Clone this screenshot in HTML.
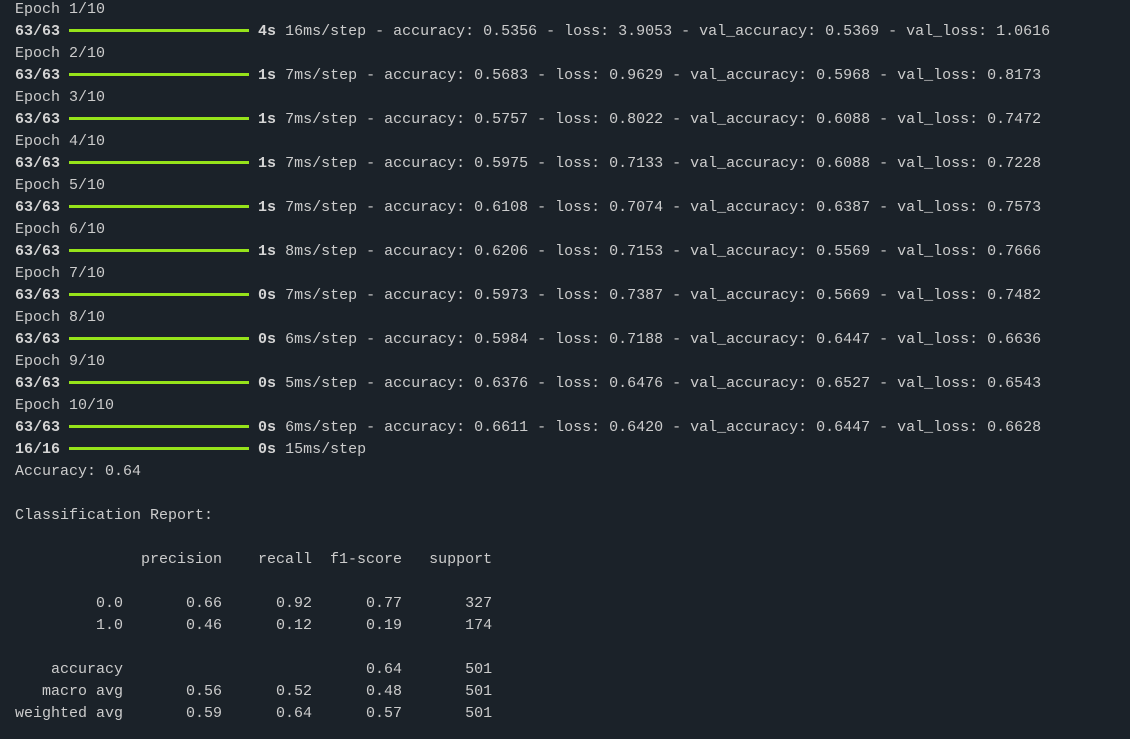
<!DOCTYPE html>
<html><head><meta charset="utf-8"><style>
html,body{margin:0;padding:0;background:#1b2229;width:1130px;height:739px;overflow:hidden}
pre{margin:-1px 0 0 15px;font-family:"Liberation Mono",monospace;font-size:15px;line-height:22px;color:#cccccc;white-space:pre}
b{font-weight:bold;color:#d4d4d4}
.bar{display:inline-block;width:180px;height:3px;background:#96e31a;vertical-align:middle;margin:0 0 2px 0}
</style></head><body><pre>Epoch 1/10
<b>63/63</b> <span class="bar"></span> <b>4s</b> 16ms/step - accuracy: 0.5356 - loss: 3.9053 - val_accuracy: 0.5369 - val_loss: 1.0616
Epoch 2/10
<b>63/63</b> <span class="bar"></span> <b>1s</b> 7ms/step - accuracy: 0.5683 - loss: 0.9629 - val_accuracy: 0.5968 - val_loss: 0.8173
Epoch 3/10
<b>63/63</b> <span class="bar"></span> <b>1s</b> 7ms/step - accuracy: 0.5757 - loss: 0.8022 - val_accuracy: 0.6088 - val_loss: 0.7472
Epoch 4/10
<b>63/63</b> <span class="bar"></span> <b>1s</b> 7ms/step - accuracy: 0.5975 - loss: 0.7133 - val_accuracy: 0.6088 - val_loss: 0.7228
Epoch 5/10
<b>63/63</b> <span class="bar"></span> <b>1s</b> 7ms/step - accuracy: 0.6108 - loss: 0.7074 - val_accuracy: 0.6387 - val_loss: 0.7573
Epoch 6/10
<b>63/63</b> <span class="bar"></span> <b>1s</b> 8ms/step - accuracy: 0.6206 - loss: 0.7153 - val_accuracy: 0.5569 - val_loss: 0.7666
Epoch 7/10
<b>63/63</b> <span class="bar"></span> <b>0s</b> 7ms/step - accuracy: 0.5973 - loss: 0.7387 - val_accuracy: 0.5669 - val_loss: 0.7482
Epoch 8/10
<b>63/63</b> <span class="bar"></span> <b>0s</b> 6ms/step - accuracy: 0.5984 - loss: 0.7188 - val_accuracy: 0.6447 - val_loss: 0.6636
Epoch 9/10
<b>63/63</b> <span class="bar"></span> <b>0s</b> 5ms/step - accuracy: 0.6376 - loss: 0.6476 - val_accuracy: 0.6527 - val_loss: 0.6543
Epoch 10/10
<b>63/63</b> <span class="bar"></span> <b>0s</b> 6ms/step - accuracy: 0.6611 - loss: 0.6420 - val_accuracy: 0.6447 - val_loss: 0.6628
<b>16/16</b> <span class="bar"></span> <b>0s</b> 15ms/step
Accuracy: 0.64

Classification Report:

              precision    recall  f1-score   support

         0.0       0.66      0.92      0.77       327
         1.0       0.46      0.12      0.19       174

    accuracy                           0.64       501
   macro avg       0.56      0.52      0.48       501
weighted avg       0.59      0.64      0.57       501
</pre></body></html>
